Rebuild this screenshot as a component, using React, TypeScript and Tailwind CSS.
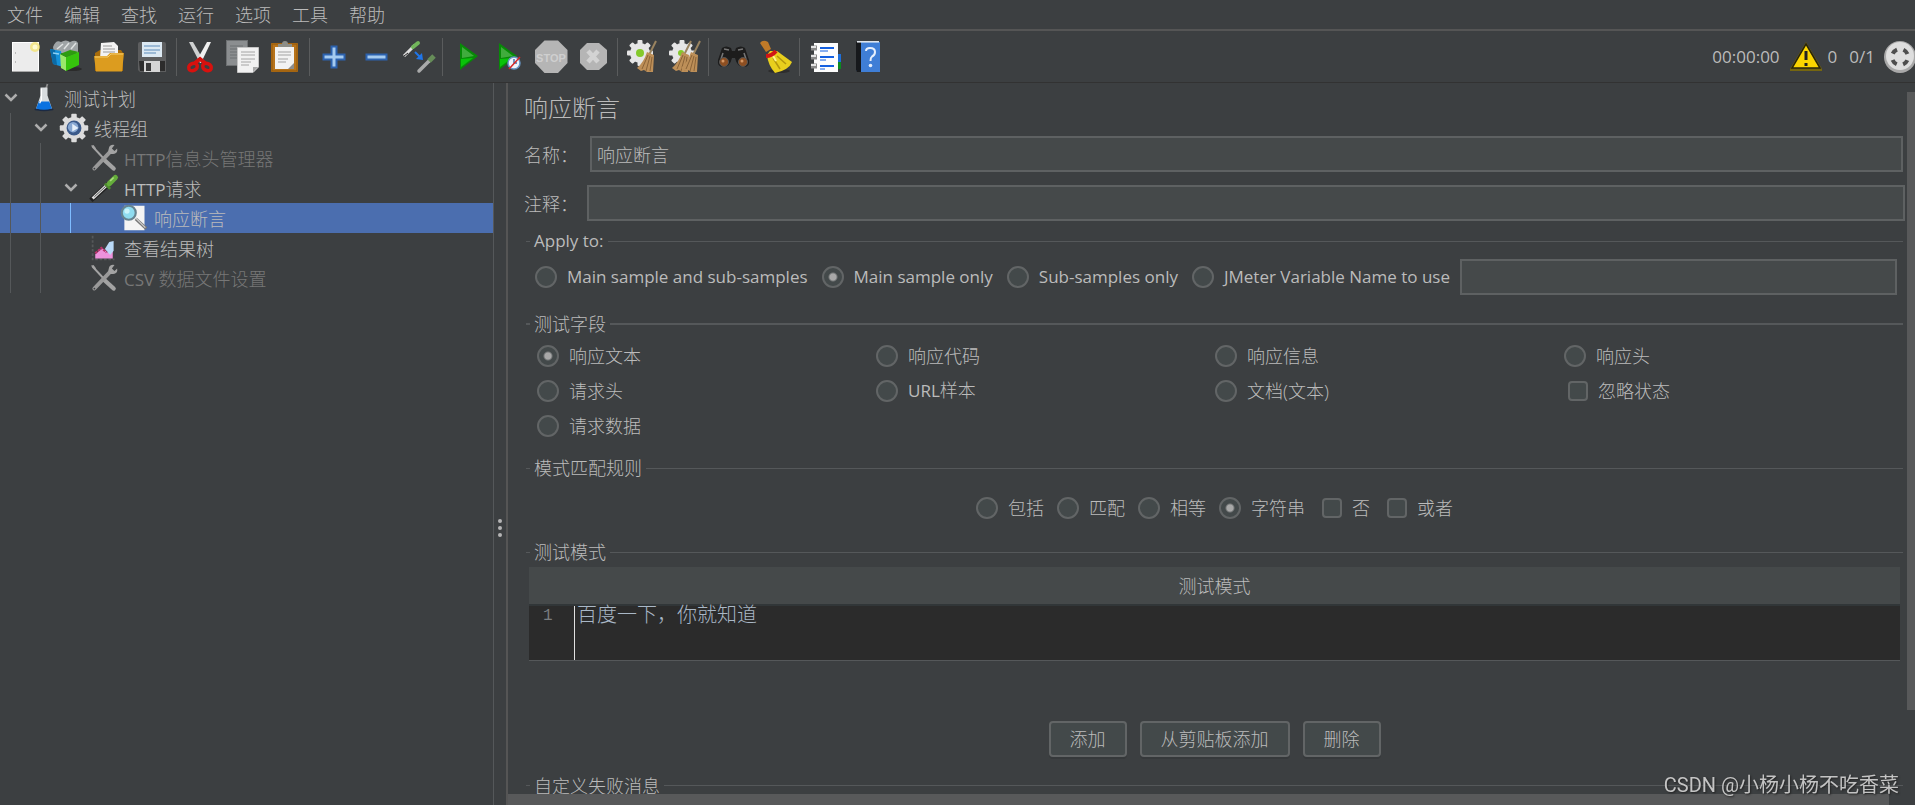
import type { ReactNode } from "react";
import clsx from "clsx";

function Svg({ label, size = 32, children }: { label?: string; size?: number; children: ReactNode }) {
  return (
    <svg width={size} height={size} viewBox="0 0 32 32" className="shrink-0 overflow-visible" aria-label={label} aria-hidden={!label}>
      {children}
    </svg>
  );
}

const gearTeeth = [0, 45, 90, 135, 180, 225, 270, 315];

function Gear({ cx, cy, r, fill }: { cx: number; cy: number; r: number; fill: string }) {
  return (
    <g fill={fill}>
      <circle cx={cx} cy={cy} r={r} />
      {gearTeeth.map((a) => (
        <rect key={a} x={cx - r * 0.25} y={cy - r * 1.3} width={r * 0.5} height={r * 0.5} rx="1" transform={`rotate(${a} ${cx} ${cy})`} />
      ))}
    </g>
  );
}

function BroomHead({ x }: { x: number }) {
  return (
    <g transform={`translate(${x} 0)`}>
      <path d="M28 0 L21 14" stroke="#9a8460" strokeWidth="2" />
      <path d="M19 11 L26 14 L25 31 L19 31 L16 29 L13 30 L9 27 Q16 21 19 11Z" fill="#bd8f58" />
      <path d="M20 14 L14 28 M22 15 L18 30 M24 16 L22 30" stroke="#8a6338" strokeWidth="1" />
    </g>
  );
}

const toolbar: { name: string; art: ReactNode }[][] = [
  [
    {
      name: "新建",
      art: (
        <>
          <rect x="2.5" y="1.500" width="26" height="29" fill="#ececec" stroke="#fff" />
          <path d="M2 30.500H29" stroke="#a7a7a7" />
          <path d="M5 12h1M5 21h1" stroke="#aaa" strokeWidth="1.500" />
          <circle cx="25" cy="6" r="5" fill="#f4e36b" opacity=".75" />
          <circle cx="25" cy="6" r="2.500" fill="#fffbd0" />
        </>
      ),
    },
    {
      name: "模板",
      art: (
        <>
          <path d="M1 6 Q4 -2 9 1 Q14 -2 18 1 Q24 -2 26 2 L26 12 L2 12Z" fill="#9fa4a6" />
          <path d="M5 8l6-5M12 8l5-6M19 8l5-6" stroke="#dfe2e2" strokeWidth="1.500" />
          <path d="M-2 8 L9 10 L11 26 L1 23Z" fill="#1591d8" />
          <path d="M-2 8 L3 9 L5 24 L1 23Z" fill="#0b6aa6" />
          <path d="M1 12l6 1" stroke="#8cd1f5" strokeWidth="1.500" />
          <ellipse cx="20" cy="28" rx="10" ry="2" fill="#2b2b2b" />
          <path d="M8 13 L14 16 L14 30 L9 27Z" fill="#9be86a" />
          <path d="M8 13 L18 9 L27 11 L14 16Z" fill="#2e9c10" />
          <path d="M14 16 L27 11 L27 24 L14 30Z" fill="#36c40d" />
        </>
      ),
    },
    {
      name: "打开",
      art: (
        <>
          <path d="M1 12 L6 9 L27 9 L29 12 L29 30 L1 30Z" fill="#a86c0a" />
          <path d="M7 2 L20 1 L24 5 L24 18 L6 18Z" fill="#f3f3f3" />
          <path d="M9 5h9M9 8h12M9 11h12" stroke="#999" />
          <path d="M0 15 L13 15 L16 12 L30 12 L28 30.500 L2 30.500Z" fill="#dc9c1f" />
          <path d="M1 16 L14 16 L17 13 L29 13" fill="none" stroke="#f6cd6d" />
        </>
      ),
    },
    {
      name: "保存",
      art: (
        <>
          <path d="M2 3 Q2 1 4 1 H28 Q30 1 30 3 V31 H4 L2 29Z" fill="#5d5e5f" />
          <path d="M3 20H29V30H4Z" fill="#2c2c2c" />
          <rect x="6" y="1" width="20" height="15" fill="#dce9f3" />
          <path d="M8 5h16M8 9h16M8 12h12" stroke="#87aacd" strokeWidth="1.500" />
          <rect x="8" y="20" width="16" height="11" fill="#d5d5d5" />
          <rect x="10" y="22" width="5" height="8" fill="#3a3a3a" />
        </>
      ),
    },
  ],
  [
    {
      name: "剪切",
      art: (
        <>
          <path d="M4 1 L8 1 L19 20 L15 22Z" fill="#cfd1d1" />
          <path d="M26 1 L22 1 L12 19 L16 22Z" fill="#f0f0f0" />
          <ellipse cx="8" cy="26" rx="4.500" ry="3.500" fill="none" stroke="#d8110e" strokeWidth="3.500" transform="rotate(-25 8 26)" />
          <ellipse cx="22" cy="26" rx="4.500" ry="3.500" fill="none" stroke="#d8110e" strokeWidth="3.500" transform="rotate(25 22 26)" />
          <path d="M10 22 L15 18 L20 22" fill="none" stroke="#d8110e" strokeWidth="4" />
        </>
      ),
    },
    {
      name: "复制",
      art: (
        <>
          <rect x="-.5" y="-.5" width="21" height="25" fill="#8b8e90" stroke="#6d7072" />
          <path d="M3 5h13M3 8h13M3 11h8M3 14h8M3 17h8" stroke="#6d7072" />
          <path d="M10.500 6.500H31.500V26L26 31.500H10.500Z" fill="#f1f1f1" stroke="#c4c4c4" />
          <path d="M14 11h14M14 14h14M14 18h14M14 21h10M14 24h8" stroke="#a4a4a4" />
          <path d="M31 26h-5v5Z" fill="#a8a8a8" />
        </>
      ),
    },
    {
      name: "粘贴",
      art: (
        <>
          <rect x="2" y="2" width="27" height="29" rx="1" fill="#b6731b" />
          <rect x="3" y="3" width="25" height="27" fill="none" stroke="#935909" />
          <rect x="6" y="6" width="19" height="22" fill="#f2f2f2" />
          <path d="M9 11h13M9 14h13M9 18h10M9 21h8" stroke="#a2a2a2" />
          <path d="M25 22v6h-6Z" fill="#8c8c8c" />
          <path d="M9 6V3h4q0-3 3-3t3 3h4v3Z" fill="#8d8e88" />
        </>
      ),
    },
  ],
  [
    {
      name: "展开",
      art: <path d="M13.500 5.500h5v8h8v5h-8v8h-5v-8h-8v-5h8Z" fill="#a5cbf0" stroke="#2c62ae" strokeWidth="2" />,
    },
    {
      name: "折叠",
      art: <rect x="6.500" y="13.500" width="20" height="5" fill="#a5cbf0" stroke="#2c62ae" strokeWidth="2" />,
    },
    {
      name: "切换",
      art: (
        <>
          <path d="M2 15 L13 4" stroke="#dedede" strokeWidth="3" />
          <path d="M2 15 L6 12" stroke="#222" />
          <path d="M11 6 L16 2" stroke="#72b55b" strokeWidth="4" strokeLinecap="round" />
          <path d="M13 11 L18 16" stroke="#1f75e8" strokeWidth="2" />
          <path d="M21 19 L20 12 L14 18Z" fill="#1f75e8" />
          <path d="M17 30 L27 20" stroke="#a9aaaa" strokeWidth="3.500" strokeLinecap="round" />
          <path d="M27 20 L32 15" stroke="#668d58" strokeWidth="5" />
        </>
      ),
    },
  ],
  [
    {
      name: "启动",
      art: (
        <>
          <path d="M9 2 L27 15 L9 29Z" fill="#078a07" />
          <path d="M11 6 L23 15 L11 17Z" fill="#5fbf5a" opacity=".65" />
          <path d="M10 18 L22 17 L10 26Z" fill="#09c409" />
        </>
      ),
    },
    {
      name: "不停顿启动",
      art: (
        <>
          <path d="M6 2 L24 15 L6 29Z" fill="#078a07" />
          <path d="M8 6 L20 15 L8 17Z" fill="#5fbf5a" opacity=".65" />
          <path d="M7 18 L19 17 L7 26Z" fill="#09c409" />
          <circle cx="21" cy="22" r="6" fill="#eef3fa" stroke="#6794c4" strokeWidth="1.500" />
          <path d="M21 18v4h3" stroke="#4774aa" fill="none" strokeWidth="1.500" />
          <path d="M16 28 L27 16" stroke="#d72626" strokeWidth="1.500" />
        </>
      ),
    },
    {
      name: "停止",
      art: (
        <>
          <path d="M9.500 -.5 H23 L32.500 9 V22 L23 32 H9.500 L0 22 V9Z" fill="#b5b5b5" />
          <text x="16" y="21" textAnchor="middle" className="font-['Liberation_Sans'] text-[11px] font-bold" fill="#cfcfcf">STOP</text>
        </>
      ),
    },
    {
      name: "关闭",
      art: (
        <>
          <path d="M10 2 H22 L30 9 V22 L22 29 H10 L3 22 V9Z" fill="#b5b5b5" />
          <path d="M11 10 L21 21 M21 10 L11 21" stroke="#d3d3d3" strokeWidth="4.500" />
        </>
      ),
    },
  ],
  [
    {
      name: "清除",
      art: (
        <>
          <Gear cx={14} cy={12} r={10} fill="#e6e6e6" />
          <circle cx="14" cy="12" r="4" fill="#84c92c" />
          <BroomHead x={2} />
        </>
      ),
    },
    {
      name: "清除全部",
      art: (
        <>
          <Gear cx={14} cy={12} r={10} fill="#e6e6e6" />
          <circle cx="13" cy="12" r="3" fill="#84c92c" />
          <BroomHead x={-5} />
          <BroomHead x={4} />
        </>
      ),
    },
  ],
  [
    {
      name: "查找",
      art: (
        <>
          <path d="M5 7 Q9 4 14 7 L15 10 H18 L19 7 Q24 4 28 7 L32 19 Q33 26 27 26 Q20 26 18 17 H15 Q13 26 6 26 Q0 26 1 19Z" fill="#1c1c1c" />
          <path d="M7 8l5 1M21 9l5-1M6 12l-2 6M27 12l2 6" stroke="#777" strokeWidth="1.500" />
          <circle cx="7" cy="21" r="4.500" fill="#8d4f22" stroke="#555" />
          <circle cx="26" cy="21" r="4.500" fill="#8d4f22" stroke="#555" />
          <circle cx="6" cy="20" r="1.500" fill="#d59662" />
          <circle cx="25" cy="20" r="1.500" fill="#d59662" />
        </>
      ),
    },
    {
      name: "重置查找",
      art: (
        <>
          <ellipse cx="20" cy="30" rx="11" ry="2" fill="#2d2d2d" />
          <path d="M1 2 Q4 -2 9 1 L12 8 L7 11Z" fill="#c07a28" />
          <path d="M11 10 L18 10 L33 21 Q30 29 16 32 Q9 24 8 14Z" fill="#e8cf1d" />
          <path d="M18 15 L27 23 M14 17 L21 28" stroke="#b3970d" strokeWidth="1.500" />
          <path d="M13 13 L17 20" stroke="#fff48a" strokeWidth="2" />
          <path d="M7 15 Q13 15 17 10" fill="none" stroke="#d11515" strokeWidth="4" />
        </>
      ),
    },
  ],
  [
    {
      name: "函数助手",
      art: (
        <>
          <rect x="25" y="13" width="8" height="8" fill="#1e6fd8" />
          <rect x="25" y="21" width="8" height="7" fill="#0b8a1f" />
          <rect x="6" y="2" width="24" height="29" fill="#fdfdfd" />
          <path d="M12 7h14M12 16h14M12 25h14" stroke="#1560e0" strokeWidth="2" />
          <path d="M12 10h8M12 19h6M12 28h5" stroke="#1560e0" />
          <path d="M3 7h6M3 16h6M3 25h6" stroke="#8a8a8a" strokeWidth="5" />
          <path d="M3 6h5M3 15h5M3 24h5" stroke="#e4e4e4" strokeWidth="2" />
        </>
      ),
    },
    {
      name: "帮助",
      art: (
        <>
          <path d="M6 1 H30 V31 H8 L6 29Z" fill="#3f7ed6" />
          <path d="M6 1 H11 V31 H7 L6 29Z" fill="#17191c" />
          <path d="M7 .8H29" stroke="#e8eef5" strokeWidth="1.500" />
          <path d="M16 10 Q16 7 20 7 Q25 7 25 11 Q25 14 22 15.500 Q20.500 16.500 20.500 20" fill="none" stroke="#e6effc" strokeWidth="2" />
          <circle cx="20.500" cy="24.500" r="1.800" fill="#e6effc" />
        </>
      ),
    },
  ],
];

const toolsArt = (
  <>
    <path d="M3 3 L16 17" stroke="#a3a3a3" strokeWidth="2.500" />
    <path d="M1 2 L4 1 L7 5 L5 6Z" fill="#a3a3a3" />
    <path d="M16 18 L27 28" stroke="#a3a3a3" strokeWidth="5" strokeLinecap="round" />
    <path d="M5 28 L23 9" stroke="#999" strokeWidth="4.500" strokeLinecap="round" />
    <path d="M22 3 Q24 0 28 1 L25 5 L28 8 L31 5 Q32 10 28 11 Q21 13 21 7Z" fill="#a3a3a3" />
    <circle cx="5" cy="28" r="1" fill="#3c3f41" />
  </>
);

type Node = { depth: number; latin?: string; label: string; open?: boolean; selected?: boolean; disabled?: boolean; art: ReactNode };

const tree: Node[] = [
  {
    depth: 0,
    label: "测试计划",
    open: true,
    art: (
      <>
        <path d="M18 6 L20 0" stroke="#8d8d8d" strokeWidth="2" />
        <ellipse cx="16" cy="29" rx="11" ry="2" fill="#1b2a44" />
        <path d="M12 4 H20 V13 L25 28 H7 L12 13Z" fill="#d8dcde" />
        <path d="M10 20 H22 L25 28 Q16 31 7 28Z" fill="#0b72e0" />
        <path d="M13 5v13l-2 4" stroke="#fff" strokeWidth="1.500" fill="none" />
      </>
    ),
  },
  {
    depth: 1,
    label: "线程组",
    open: true,
    art: (
      <>
        <Gear cx={16} cy={16} r={12.5} fill="#dcdcdc" />
        <circle cx="16" cy="16" r="8.500" fill="#3b5a8a" />
        <circle cx="15" cy="15" r="6" fill="#87a7d2" />
        <path d="M14 11 L21 16 L14 20Z" fill="#e5effa" />
      </>
    ),
  },
  { depth: 2, latin: "HTTP", label: "信息头管理器", disabled: true, art: toolsArt },
  {
    depth: 2,
    latin: "HTTP",
    label: "请求",
    open: true,
    art: (
      <>
        <path d="M1 30 L22 11" stroke="#202020" strokeWidth="5.500" />
        <path d="M3 28 L20 12" stroke="#dcdcdc" strokeWidth="3.500" />
        <path d="M5 26 L18 14" stroke="#444" strokeWidth="1" />
        <path d="M17 11 L23 17" stroke="#4d8a2e" strokeWidth="3" />
        <path d="M22 11 L29 4" stroke="#65ad3b" strokeWidth="6" strokeLinecap="round" />
        <path d="M23 8 L27 4" stroke="#a8dc7c" strokeWidth="2" />
      </>
    ),
  },
  {
    depth: 3,
    label: "响应断言",
    selected: true,
    art: (
      <>
        <rect x="5" y="2" width="23" height="28" fill="#f4f4f4" />
        <path d="M18 17 L30 28" stroke="#777" strokeWidth="3.500" />
        <path d="M18 16 L29 27" stroke="#ccc" strokeWidth="1.500" />
        <circle cx="10" cy="10" r="8" fill="#8fdcf0" stroke="#668390" strokeWidth="2.500" />
        <circle cx="8" cy="8" r="3" fill="#c9f3fb" />
      </>
    ),
  },
  {
    depth: 2,
    label: "查看结果树",
    art: (
      <>
        <path d="M3 2V29H28" fill="none" stroke="#55585a" strokeWidth="2" strokeDasharray="3 2" />
        <path d="M6 28 V23 L14 16 L20 21 L26 16 V28Z" fill="#ee92dc" />
        <path d="M17 17 L22 9 L27 8 V19 L23 24Z" fill="#b9d9f7" />
        <path d="M6 22 L13 16 L19 21" fill="none" stroke="#b8326b" strokeWidth="2.500" strokeDasharray="3 1" />
      </>
    ),
  },
  { depth: 2, latin: "CSV ", label: "数据文件设置", disabled: true, art: toolsArt },
];

const latinClass = "text-[17px] font-normal";

function TreeRow({ node }: { node: Node }) {
  return (
    <li className={clsx("flex h-[30px] items-center", node.selected && "bg-[#4b6eaf]", node.disabled ? "text-[#777777]" : "text-[#bbbbbb]")}>
      {Array.from({ length: node.depth }, (_, i) => (
        <span key={i} className="h-full w-[30px] shrink-0 pl-2.5">
          <span className={clsx("block h-full border-l", i === 2 ? "border-[#7fbcff]" : "border-[#55585a]")} />
        </span>
      ))}
      <span className="w-[30px] shrink-0 pl-1">
        {node.open && (
          <svg width="14" height="10" viewBox="0 0 14 10" aria-hidden>
            <path d="M1.500 1.500 L7 7 L12.500 1.500" fill="none" stroke="#adadad" strokeWidth="2.500" />
          </svg>
        )}
      </span>
      <Svg size={28}>{node.art}</Svg>
      <span className="ml-1.5 pt-0.5 whitespace-pre">
        {node.latin && <span className={latinClass}>{node.latin}</span>}
        {node.label}
      </span>
    </li>
  );
}

const fieldClass = "h-9 min-w-0 flex-1 border-2 border-[#5e6162] bg-[#45494a] px-[5px] text-[#bbbbbb] outline-none";

function Choice({ type = "radio", name, label, checked, latin }: { type?: "radio" | "checkbox"; name: string; label: ReactNode; checked?: boolean; latin?: boolean }) {
  return (
    <label className={clsx("flex items-center gap-2.5 whitespace-nowrap", latin && latinClass)}>
      <input
        type={type}
        name={name}
        defaultChecked={checked}
        className={clsx(
          "shrink-0 appearance-none border-2 border-[#626566] bg-[#43494a]",
          type === "radio"
            ? "size-[22px] rounded-full checked:bg-[radial-gradient(circle,#a8a8a8_3px,#43494a_5px)]"
            : "ml-1 size-5 rounded-sm"
        )}
      />
      {label}
    </label>
  );
}

function Group({ title, className, latin, thick, children }: { title: string; className?: string; latin?: boolean; thick?: boolean; children?: ReactNode }) {
  return (
    <fieldset className={clsx("mr-1 ml-[18px] min-w-0 border-[#55585a]", thick ? "border-t-2" : "border-t", className)}>
      <legend className={clsx("ml-1 px-1 leading-6", latin && latinClass)}>{title}</legend>
      {children}
    </fieldset>
  );
}

function ActionButton({ children }: { children: ReactNode }) {
  return (
    <button className="h-9 rounded border-2 border-[#626566] bg-[#43494a] px-[19px] leading-none shadow-[0_2px_0_#36393b]">
      {children}
    </button>
  );
}

export default function App() {
  return (
    <div className="flex h-screen flex-col overflow-hidden bg-[#3c3f41] font-['Open_Sans','Noto_Sans_CJK_SC',sans-serif] text-lg leading-6 font-light text-[#bbbbbb]">
      <nav className="flex h-[31px] shrink-0 items-center gap-[21px] border-b-2 border-[#555555] px-[7px]">
        {["文件", "编辑", "查找", "运行", "选项", "工具", "帮助"].map((m) => (
          <button key={m}>{m}</button>
        ))}
      </nav>

      <header className="flex h-[52px] shrink-0 items-center border-b border-[#323232] pl-[5px]">
        {toolbar.map((group, i) => (
          <div key={i} className="flex items-center">
            {i > 0 && <span className="mx-[3px] h-[38px] w-px bg-[#5a5c5d]" />}
            {group.map((item) => (
              <button key={item.name} className="flex w-[42px] justify-center" aria-label={item.name}>
                <Svg>{item.art}</Svg>
              </button>
            ))}
          </div>
        ))}
        <div className={clsx("ml-auto flex items-center", latinClass)}>
          <span>00:00:00</span>
          <span className="mr-1.5 ml-2.5">
            <Svg label="警告">
              <path d="M16 1 L32 28 V30 H0 V28Z" fill="#756610" />
              <path d="M16 3 L30 27 H2Z" fill="#fbd500" stroke="#29250b" strokeWidth="1.500" />
              <path d="M16 10v9M16 22v3" stroke="#222" strokeWidth="3" />
            </Svg>
          </span>
          <span className="mr-3">0</span>
          <span className="mr-2">0/1</span>
          <Svg label="线程">
            <circle cx="17" cy="16" r="16" fill="#a9a9a9" />
            <circle cx="17" cy="15" r="14" fill="#dedede" />
            <circle cx="17" cy="16" r="8" fill="none" stroke="#4e4e4e" strokeWidth="4" strokeDasharray="6 6.566" strokeDashoffset="-3.283" />
          </Svg>
        </div>
      </header>

      <div className="flex min-h-0 flex-1">
        <aside className="w-[494px] shrink-0 border-r border-[#55585a]">
          <ul>
            {tree.map((n, i) => (
              <TreeRow key={i} node={n} />
            ))}
          </ul>
        </aside>
        <div className="flex w-3 shrink-0 flex-col items-center justify-center gap-[3px] pt-[168px]">
          <span className="size-1 rounded-full bg-[#b5b5b5]" />
          <span className="size-1 rounded-full bg-[#b5b5b5]" />
          <span className="size-1 rounded-full bg-[#b5b5b5]" />
        </div>

        <div className="flex min-w-0 flex-1 flex-col border-l-2 border-[#555555]">
          <div className="flex min-h-0 flex-1">
            <main className="min-w-0 flex-1 overflow-hidden pt-[9px]">
              <h1 className="ml-4 text-2xl leading-8">响应断言</h1>
              <div className="mt-3 flex items-center pr-1 pl-4">
                <label htmlFor="name" className="w-[66px] pt-0.5">名称：</label>
                <input id="name" defaultValue="响应断言" className={fieldClass} />
              </div>
              <div className="mt-[13px] flex items-center pr-0.5 pl-4">
                <label htmlFor="comment" className="w-[63px] pt-0.5">注释：</label>
                <input id="comment" className={fieldClass} />
              </div>

              <Group title="Apply to:" latin className="mt-2">
                <div className="flex items-center gap-3.5 pt-1.5 pr-1.5 pl-[9px]">
                  <Choice latin name="scope" label="Main sample and sub-samples" />
                  <Choice latin name="scope" label="Main sample only" checked />
                  <Choice latin name="scope" label="Sub-samples only" />
                  <Choice latin name="scope" label="JMeter Variable Name to use" />
                  <input aria-label="JMeter Variable Name" className={clsx(fieldClass, "-ml-1")} />
                </div>
              </Group>

              <Group title="测试字段" thick className="mt-[17px]">
                <div className="grid auto-rows-[35px] grid-cols-[339fr_339fr_349fr_339fr] pt-0.5 pl-[11px]">
                  <Choice name="field" label="响应文本" checked />
                  <Choice name="field" label="响应代码" />
                  <Choice name="field" label="响应信息" />
                  <Choice name="field" label="响应头" />
                  <Choice name="field" label="请求头" />
                  <Choice name="field" label={<span><span className={latinClass}>URL</span>样本</span>} />
                  <Choice name="field" label="文档(文本)" />
                  <Choice type="checkbox" name="ignore" label="忽略状态" />
                  <Choice name="field" label="请求数据" />
                </div>
              </Group>

              <Group title="模式匹配规则" className="mt-[13px]">
                <div className="flex justify-center gap-[13px] pt-4">
                  <Choice name="rule" label="包括" />
                  <Choice name="rule" label="匹配" />
                  <Choice name="rule" label="相等" />
                  <Choice name="rule" label="字符串" checked />
                  <Choice type="checkbox" name="not" label="否" />
                  <Choice type="checkbox" name="or" label="或者" />
                </div>
              </Group>

              <Group title="测试模式" className="mt-5">
                <div className="px-[3px] pt-[3px]">
                  <table className="w-full border-collapse">
                    <thead>
                      <tr className="h-[38px] border-b-2 border-[#313638] bg-[#45494a]">
                        <th className="font-light">测试模式</th>
                      </tr>
                    </thead>
                    <tbody>
                      <tr className="h-[55px] border-b border-[#55585a] bg-[#2b2b2b]">
                        <td className="h-[55px] p-0">
                          <div className="flex h-full">
                            <span className="w-[46px] border-r border-[#e0e0e0] pl-3.5 font-['Liberation_Mono'] text-base leading-5 text-[#7a7d80]">1</span>
                            <span className="pl-0.5 text-xl leading-[18px] text-[#a9b7c6]">百度一下，你就知道</span>
                          </div>
                        </td>
                      </tr>
                    </tbody>
                  </table>
                </div>
                <div className="mt-[60px] flex justify-center gap-[13px]">
                  <ActionButton>添加</ActionButton>
                  <ActionButton>从剪贴板添加</ActionButton>
                  <ActionButton>删除</ActionButton>
                </div>
              </Group>

              <Group title="自定义失败消息" className="mt-[17px]" />
            </main>
            <div className="w-2 shrink-0 pt-[9px]">
              <div className="h-[88%] bg-[#58595a]" />
            </div>
          </div>
          <div className="h-[11px] shrink-0 pr-[26px]">
            <div className="h-full bg-[#58595a]" />
          </div>
        </div>
      </div>

      <p className="fixed right-4 bottom-2 font-[Roboto,'Noto_Sans_CJK_SC',sans-serif] text-xl leading-6 font-normal text-[#c4c4c4] [text-shadow:1px_1px_2px_#222]">
        CSDN @小杨小杨不吃香菜
      </p>
    </div>
  );
}
